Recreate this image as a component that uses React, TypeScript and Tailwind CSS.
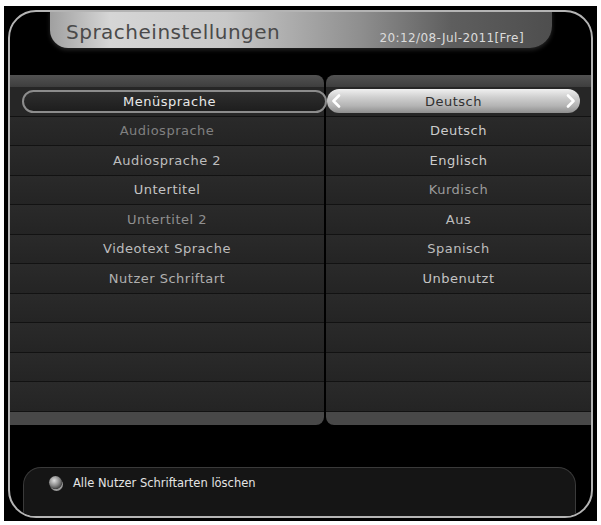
import React from "react";

const rows: { label: string; value: string; lc: string; vc: string }[] = [
  { label: "Audiosprache", value: "Deutsch", lc: "text-[#808080]", vc: "text-[#cccccc]" },
  { label: "Audiosprache 2", value: "Englisch", lc: "text-[#bdbdbd]", vc: "text-[#cccccc]" },
  { label: "Untertitel", value: "Kurdisch", lc: "text-[#c4c4c4]", vc: "text-[#9c9c9c]" },
  { label: "Untertitel 2", value: "Aus", lc: "text-[#909090]", vc: "text-[#bdbdbd]" },
  { label: "Videotext Sprache", value: "Spanisch", lc: "text-[#bdbdbd]", vc: "text-[#bdbdbd]" },
  { label: "Nutzer Schriftart", value: "Unbenutzt", lc: "text-[#b0b0b0]", vc: "text-[#c4c4c4]" },
];

const font = { fontFamily: '"DejaVu Sans", Verdana, sans-serif' };

export default function App() {
  return (
    <div className="w-[601px] h-[525px] bg-white pt-[6px] pl-[4px]" style={font}>
      <div className="w-[593px] h-[515px] bg-black pt-[4px] pl-[4px]">
        {/* Frame */}
        <div className="w-[585px] h-[508px] rounded-[28px] border-2 border-[#b4b4b4] overflow-hidden flex flex-col bg-black">
          {/* Title tab */}
          <div className="-mt-[2px] ml-[40px] w-[502px] h-[38px] rounded-bl-[18px] rounded-br-[22px] bg-[linear-gradient(90deg,#a0a0a0_0%,#d6d6d6_12%,#c8c8c8_35%,#8e8e8e_62%,#5e5e5e_80%,#4e4e4e_100%)] shadow-[0_2px_4px_rgba(255,255,255,0.15)] flex items-center justify-between pl-[16px] pr-[28px]">
            <span className="text-[20px] tracking-[0.5px] text-[#4a4a4a] mt-[6px]">Spracheinstellungen</span>
            <span className="text-[12px] tracking-[0.4px] text-[#dcdcdc] mt-[18px]">20:12/08-Jul-2011[Fre]</span>
          </div>

          {/* Table */}
          <div className="mt-[27px] h-[350px] flex">
            {/* Left column */}
            <div className="w-[314px] flex flex-col">
              <div className="h-[12px] bg-[linear-gradient(180deg,#525252,#3e3e3e)] rounded-tr-[8px]" />
              <div className="h-[29.5px] bg-[#262626] border-b border-[#121212] flex items-center">
                <div className="relative z-10 ml-[12px] -mr-[3px] flex-1 h-[23px] rounded-full border-2 border-[#8c8c8c] bg-[linear-gradient(180deg,#2e2e2e,#1e1e1e)] flex items-center justify-center pr-[10px] text-[13px] tracking-[0.5px] text-[#e8e8e8]">
                  Menüsprache
                </div>
              </div>
              {rows.map((r) => (
                <div key={r.label} className={`h-[29.5px] bg-[linear-gradient(180deg,#2a2a2a,#242424)] border-b border-[#121212] flex items-center justify-center text-[13px] tracking-[0.5px] ${r.lc}`}>
                  {r.label}
                </div>
              ))}
              {[0, 1, 2, 3].map((i) => (
                <div key={i} className="h-[29.5px] bg-[linear-gradient(180deg,#2a2a2a,#242424)] border-b border-[#121212]" />
              ))}
              <div className="flex-1 bg-[#484848] rounded-br-[8px]" />
            </div>

            <div className="w-[2px] bg-black" />

            {/* Right column */}
            <div className="flex-1 flex flex-col">
              <div className="h-[12px] bg-[linear-gradient(180deg,#525252,#3e3e3e)] rounded-tl-[8px]" />
              <div className="h-[29.5px] bg-[#262626] border-b border-[#121212] flex items-center">
                <div className="relative ml-[1px] mr-[11px] flex-1 h-[24px] rounded-full bg-[linear-gradient(180deg,#f0f0f0_0%,#cfcfcf_35%,#b4b4b4_70%,#8e8e8e_100%)] flex items-center justify-center text-[13px] tracking-[0.5px] text-[#303030]">
                  <svg className="absolute left-[4px] top-[5px]" width="10" height="14" viewBox="0 0 10 14">
                    <path d="M8 1.5 L2.5 7 L8 12.5" fill="none" stroke="#ffffff" strokeWidth="2.6" strokeLinecap="round" strokeLinejoin="round" />
                  </svg>
                  Deutsch
                  <svg className="absolute right-[4px] top-[5px]" width="10" height="14" viewBox="0 0 10 14">
                    <path d="M2 1.5 L7.5 7 L2 12.5" fill="none" stroke="#ffffff" strokeWidth="2.6" strokeLinecap="round" strokeLinejoin="round" />
                  </svg>
                </div>
              </div>
              {rows.map((r) => (
                <div key={r.label} className={`h-[29.5px] bg-[linear-gradient(180deg,#2a2a2a,#242424)] border-b border-[#121212] flex items-center justify-center text-[13px] tracking-[0.5px] ${r.vc}`}>
                  {r.value}
                </div>
              ))}
              {[0, 1, 2, 3].map((i) => (
                <div key={i} className="h-[29.5px] bg-[linear-gradient(180deg,#2a2a2a,#242424)] border-b border-[#121212]" />
              ))}
              <div className="flex-1 bg-[#484848] rounded-bl-[8px]" />
            </div>
          </div>

          {/* Bottom help box */}
          <div className="mt-[42px] ml-[13px] mr-[15px] flex-1 rounded-t-[18px] border border-[#3a3a3a] border-b-0 bg-[#151515] flex items-start pt-[8px] pl-[25px] gap-[11px]">
            <div className="w-[13px] h-[13px] rounded-full bg-[radial-gradient(circle_at_40%_35%,#e0e0e0_0%,#8a8a8a_45%,#3a3a3a_80%)] shadow-[1px_2px_0_#9a9a9a]" />
            <span className="text-[11.5px] text-[#e4e4e4] leading-[14px]">Alle Nutzer Schriftarten löschen</span>
          </div>
        </div>
      </div>
    </div>
  );
}
